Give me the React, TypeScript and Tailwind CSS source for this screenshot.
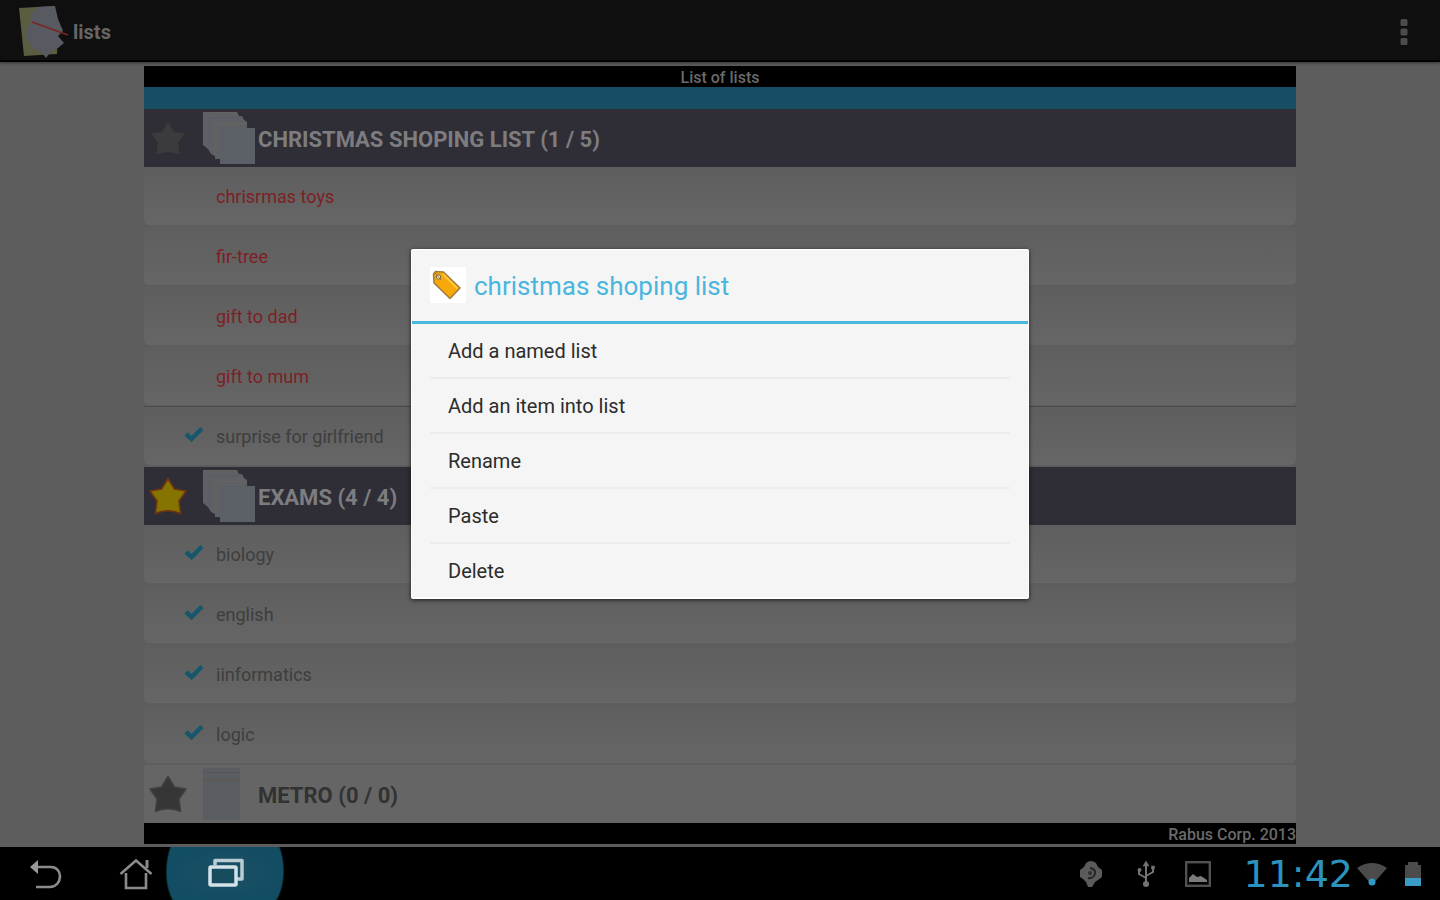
import React from 'react';

type Item = { label: string; done: boolean; divided?: boolean };

const christmas: Item[] = [
  { label: 'chrisrmas toys', done: false },
  { label: 'fir-tree', done: false },
  { label: 'gift to dad', done: false },
  { label: 'gift to mum', done: false, divided: true },
  { label: 'surprise for girlfriend', done: true },
];

const exams: Item[] = [
  { label: 'biology', done: true },
  { label: 'english', done: true },
  { label: 'iinformatics', done: true },
  { label: 'logic', done: true },
];

const actions = ['Add a named list', 'Add an item into list', 'Rename', 'Paste', 'Delete'];

function AppLogo() {
  return (
    <svg viewBox="0 0 52 54" className="h-[54px] w-[52px]" aria-hidden="true">
      <path d="M1 3 L36 1 L40 26 L39 49 L6 51 Z" fill="#5a5d40" />
      <path d="M14 8 L20 2 L37 1 L40 14 L45 26 L40 31 L46 38 L40 43 L34 45 L28 53 L23 47 L15 44 L8 32 L8 25 L13 18 Z" fill="#575a60" />
      <path d="M14 17 L50 30" stroke="#7c2323" strokeWidth="1.600" />
    </svg>
  );
}

function Star({ fill, stroke }: { fill: string; stroke: string }) {
  return (
    <svg viewBox="0 0 40 40" className="h-10 w-10" aria-hidden="true">
      <path
        d="M20 2.500 L26.500 13 L38 15 L31 25 L32.600 37.500 Q20 32 7.400 37.500 L9 25 L2 15 L13.500 13 Z"
        fill={fill}
        stroke={stroke}
        strokeWidth="1.600"
        strokeLinejoin="round"
      />
    </svg>
  );
}

function Stack() {
  return (
    <svg viewBox="0 0 54 54" className="h-[54px] w-[54px]" aria-hidden="true">
      <path d="M1 1 H35 L37 5 H40 L42 9 L45 11 V17 H52 V53 H18 V48 H13 V45 L9 43 L6 38 L1 34 Z" fill="#5d6064" />
      <path d="M1.500 34 V1.500 H35" fill="none" stroke="#64625c" />
      <path d="M7 38 V6.500 H39" fill="none" stroke="#5a5d60" />
      <path d="M13 45 V12.500 H44" fill="none" stroke="#68655a" />
      <rect x="18" y="17" width="35" height="36" fill="#5b6067" />
    </svg>
  );
}

function Sheet() {
  return (
    <svg viewBox="0 0 54 54" className="h-[54px] w-[54px]" aria-hidden="true">
      <rect x="1" y="1" width="37" height="52" rx="2" fill="#5a5e63" />
      <path d="M1 5.500 H38" stroke="#53565b" />
      <path d="M1 12.500 H38" stroke="#5c5956" strokeWidth="2" />
    </svg>
  );
}

function ItemRow({ item }: { item: Item }) {
  return (
    <li className={item.divided ? 'h-[60px] border-b border-[#4b4b4b] pb-px' : 'h-[60px] pb-0.5'}>
      <label className="flex h-full items-center rounded-b-md bg-linear-to-b from-[#5e5e5e] to-[#666666] pl-10">
        <input type="checkbox" defaultChecked={item.done} className="peer sr-only" />
        <svg viewBox="0 0 20 16" className="invisible mb-1 h-4 w-5 peer-checked:visible" aria-hidden="true">
          <path d="M2 8 L7.500 13 L18 2.500" fill="none" stroke="#17566c" strokeWidth="4.500" />
        </svg>
        <span className={item.done ? 'ml-3 pt-0.5 text-lg text-[#3e3e3e]' : 'ml-3 pt-0.5 text-lg text-[#7e1f24]'}>{item.label}</span>
      </label>
    </li>
  );
}

function GroupHeader({ title, star }: { title: string; star: React.ReactNode }) {
  return (
    <header className="flex h-[58px] items-center bg-[#2f2e36] pl-1">
      <button aria-label="Favourite" className="shrink-0">{star}</button>
      <span className="ml-[14px]"><Stack /></span>
      <h2 className="ml-0.5 pt-0.5 text-[22px] font-bold text-[#7d7d80]">{title}</h2>
    </header>
  );
}

function TagIcon() {
  return (
    <svg viewBox="0 0 36 36" className="h-9 w-9 bg-white" aria-hidden="true">
      <path d="M3.500 7 L5.500 4.500 L13.500 5 L30 21 L20 31.500 L4 16 Z" fill="#f7a90c" stroke="#a07a3a" strokeWidth="1.500" strokeLinejoin="round" />
      <path d="M13 7 L27.500 21.500" stroke="#ffc93c" strokeWidth="2" />
      <circle cx="8.500" cy="10" r="2.200" fill="#ffe7a8" stroke="#7d6845" />
      <path d="M5 6 L11 13" stroke="#8b774c" />
    </svg>
  );
}

function ActionDialog() {
  return (
    <div className="absolute inset-0 flex items-center justify-center">
      <div role="dialog" aria-labelledby="dialog-title" className="w-[43%] max-w-[618px] rounded-xs border border-b-2 border-white bg-[#f5f5f5] shadow-[0_1px_4px_rgba(0,0,0,0.7)]">
        <div className="flex h-[74px] items-center gap-2 border-b-3 border-[#4ab7de] px-[18px]">
          <TagIcon />
          <h2 id="dialog-title" className="pt-0.5 text-[26px] text-[#49b6e0]">christmas shoping list</h2>
        </div>
        <ul className="px-[18px]">
          {actions.map((action) => (
            <li key={action} className="border-b-2 border-[#ececec] last:border-b-0">
              <button className="flex h-[53px] w-full items-center px-[18px] pt-0.5 text-left text-xl text-[#2c2c2c]">{action}</button>
            </li>
          ))}
        </ul>
      </div>
    </div>
  );
}

function SystemBar() {
  return (
    <footer className="flex h-[53px] items-stretch bg-black">
      <nav className="flex" aria-label="System">
        <button aria-label="Back" className="flex w-[92px] items-center justify-center">
          <svg viewBox="0 0 34 32" className="h-8 w-[34px]">
            <path d="M8 9 H22 C28 9 31 14 31 18 C31 24 27 29 21 29 H7" fill="none" stroke="#8b8b8b" strokeWidth="2.600" />
            <path d="M1 9 L9 2 V16 Z" fill="#999999" />
          </svg>
        </button>
        <button aria-label="Home" className="flex w-[88px] items-center justify-center">
          <svg viewBox="0 0 34 32" className="h-8 w-[34px]" fill="none" stroke="#8b8b8b" strokeWidth="2.600">
            <path d="M1.500 16 L17 2.500 L32.500 16" />
            <path d="M7 15 V30 H27 V15" />
            <path d="M28 2 V10" strokeWidth="3" />
          </svg>
        </button>
        <button aria-label="Recent apps" className="-ml-4 flex w-[122px] items-center justify-center">
          <svg viewBox="0 0 122 53" className="h-[53px] w-[122px]">
            <defs>
              <radialGradient id="glow">
                <stop offset="0" stopColor="#1c5064" />
                <stop offset="1" stopColor="#134d63" />
              </radialGradient>
            </defs>
            <path d="M6 0 C0 16 0 38 8 53 H113 C122 38 122 16 116 0 Z" fill="#072631" />
            <path d="M7 0 C1 16 1 38 9 53 H112 C121 38 121 16 115 0 Z" fill="url(#glow)" />
            <path d="M51 18 V13.500 H78 V32 H73" fill="none" stroke="#b9cbd3" strokeWidth="3.500" strokeLinejoin="round" />
            <rect x="46" y="20" width="26" height="18" rx="1" fill="#174b5e" stroke="#d3e2e8" strokeWidth="3.500" />
          </svg>
        </button>
      </nav>
      <div className="ml-auto flex items-center pr-[19px]">
        <svg viewBox="0 0 24 28" className="mr-[34px] h-7 w-6" aria-label="Notification">
          <path d="M7 3 Q12 -1 17 3 L19 7 L23 10 V17 L19 20 L16 22 L13 27 H9 L7 22 L4 19 L1 17 V10 L5 7 Z" fill="#5b5b5b" />
          <path d="M11 8 Q17 9 16 14 Q14 19 9 18" fill="none" stroke="#252525" strokeWidth="2" />
          <circle cx="11" cy="13" r="2" fill="#303030" />
        </svg>
        <svg viewBox="0 0 18 28" className="mr-[30px] h-7 w-[18px]" fill="none" stroke="#737373" strokeWidth="2" aria-label="USB connected">
          <path d="M9 3 V23 M9 18 L2 14 V10 M9 16 L16 12 V8" />
          <path d="M9 1 L12 6 H6 Z M14.500 6 H17.500 V9 H14.500 Z" fill="#737373" strokeWidth="0.500" />
          <circle cx="2.500" cy="10" r="2" fill="#737373" stroke="none" />
          <circle cx="9" cy="24" r="3" fill="#737373" stroke="none" />
        </svg>
        <svg viewBox="0 0 26 26" className="mr-8 h-[26px] w-[26px]" aria-label="Screenshot saved">
          <rect x="1.200" y="1.200" width="23.600" height="23.600" fill="none" stroke="#505050" strokeWidth="2.400" />
          <path d="M4 21 V17 L8 13 L12 16 L16 15 L22 19 V21 Z" fill="#7b7b7b" />
        </svg>
        <time className="font-['DejaVu_Sans',sans-serif] text-[38px] leading-none text-[#2b93bd]">11:42</time>
        <svg viewBox="0 0 30 24" className="ml-1 h-6 w-[30px]" aria-label="Wi-Fi">
          <path d="M0 6 Q15 -4 30 6 L15 23 Z" fill="#4b4b4b" />
          <circle cx="15" cy="20" r="3.500" fill="#2f9cc8" />
        </svg>
        <svg viewBox="0 0 16 26" className="ml-[18px] h-[26px] w-4" aria-label="Battery">
          <path d="M0 4 H3 V1 H13 V4 H16 V17 H0 Z" fill="#4b4b4b" />
          <rect y="17" width="16" height="8" fill="#3a9cc6" />
        </svg>
      </div>
    </footer>
  );
}

export default function App() {
  return (
    <div className="flex min-h-screen flex-col bg-[#5d5d5d] font-['Roboto',sans-serif]">
      <div className="relative flex-1">
        <header className="flex h-[62px] items-center border-b-2 border-black bg-[#0f0f0f] pt-1 pr-6 pl-[18px] shadow-[0_2px_2px_#424242]">
          <AppLogo />
          <h1 className="ml-[3px] text-xl font-bold text-[#666666]">lists</h1>
          <button aria-label="More options" className="ml-auto px-2">
            <svg viewBox="0 0 8 28" className="h-7 w-2" fill="#4c4c4c">
              <rect x="0.500" y="1" width="7" height="7" rx="1.500" />
              <rect x="0.500" y="10.500" width="7" height="7" rx="1.500" />
              <rect x="0.500" y="20" width="7" height="7" rx="1.500" />
            </svg>
          </button>
        </header>

        <main className="mx-auto w-4/5 pt-1 pb-[3px]">
          <p className="h-[21px] bg-black text-center text-base leading-6 font-medium text-[#6a6a6a]">List of lists</p>
          <div className="h-[22px] bg-[#174e64]" />

          <section>
            <GroupHeader title="CHRISTMAS SHOPING LIST (1 / 5)" star={<Star fill="#3b3b3e" stroke="#2f2e33" />} />
            <ul>{christmas.map((item) => <ItemRow key={item.label} item={item} />)}</ul>
          </section>

          <section>
            <GroupHeader title="EXAMS (4 / 4)" star={<Star fill="#857400" stroke="#6f3414" />} />
            <ul>{exams.map((item) => <ItemRow key={item.label} item={item} />)}</ul>
          </section>

          <section className="flex h-[58px] items-center bg-[#656565] pl-1">
            <button aria-label="Favourite" className="shrink-0"><Star fill="#363636" stroke="#414141" /></button>
            <span className="ml-[14px]"><Sheet /></span>
            <h2 className="ml-0.5 pt-0.5 text-[22px] font-bold text-[#323232]">METRO (0 / 0)</h2>
          </section>
          <p className="h-[21px] bg-black text-right text-base leading-6 font-medium text-[#6a6a6a]">Rabus Corp. 2013</p>
        </main>

        <ActionDialog />
      </div>
      <SystemBar />
    </div>
  );
}
